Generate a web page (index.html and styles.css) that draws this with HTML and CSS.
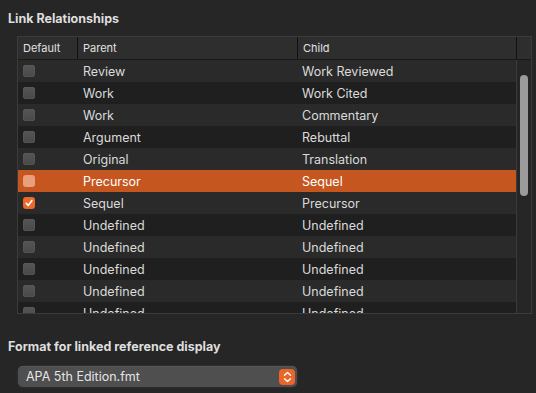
FILE: index.html
```html
<!DOCTYPE html>
<html>
<head>
<title>Link Relationships</title>
<link rel="stylesheet" href="styles.css">
</head>
<body>
<div class="prefs">
<h3 class="sec_title">Link Relationships</h3>
<div class="rel_table">
<div class="rel_head">
<div class="col col_def">Default</div>
<div class="col col_par">Parent</div>
<div class="col col_child">Child</div>
<div class="col col_sb"></div>
</div>
<div class="rel_body">
<div class="rel_rows">
<div class="row"><span class="cell col_def"><i class="chk"></i></span><span class="cell col_par">Review</span><span class="cell col_child">Work Reviewed</span></div>
<div class="row"><span class="cell col_def"><i class="chk"></i></span><span class="cell col_par">Work</span><span class="cell col_child">Work Cited</span></div>
<div class="row"><span class="cell col_def"><i class="chk"></i></span><span class="cell col_par">Work</span><span class="cell col_child">Commentary</span></div>
<div class="row"><span class="cell col_def"><i class="chk"></i></span><span class="cell col_par">Argument</span><span class="cell col_child">Rebuttal</span></div>
<div class="row"><span class="cell col_def"><i class="chk"></i></span><span class="cell col_par">Original</span><span class="cell col_child">Translation</span></div>
<div class="row selected"><span class="cell col_def"><i class="chk"></i></span><span class="cell col_par">Precursor</span><span class="cell col_child">Sequel</span></div>
<div class="row"><span class="cell col_def"><i class="chk on"><svg width="10" height="10" viewBox="0 0 10 10"><path d="M2.2 5.3 L4.2 7.4 L7.9 2.4" fill="none" stroke="#fff" stroke-width="1.6" stroke-linecap="round" stroke-linejoin="round"/></svg></i></span><span class="cell col_par">Sequel</span><span class="cell col_child">Precursor</span></div>
<div class="row"><span class="cell col_def"><i class="chk"></i></span><span class="cell col_par">Undefined</span><span class="cell col_child">Undefined</span></div>
<div class="row"><span class="cell col_def"><i class="chk"></i></span><span class="cell col_par">Undefined</span><span class="cell col_child">Undefined</span></div>
<div class="row"><span class="cell col_def"><i class="chk"></i></span><span class="cell col_par">Undefined</span><span class="cell col_child">Undefined</span></div>
<div class="row"><span class="cell col_def"><i class="chk"></i></span><span class="cell col_par">Undefined</span><span class="cell col_child">Undefined</span></div>
<div class="row"><span class="cell col_def"><i class="chk"></i></span><span class="cell col_par">Undefined</span><span class="cell col_child">Undefined</span></div>
</div>
<div class="scroll_track"><div class="scroll_thumb"></div></div>
</div>
</div>
<h3 class="sec_title fmt_title">Format for linked reference display</h3>
<div class="popup">
<span class="popup_val">APA 5th Edition.fmt</span>
<span class="stepper"><svg width="9" height="12" viewBox="0 0 9 12"><path d="M1.5 4.3 L4.5 1.5 L7.5 4.3 M1.5 7.7 L4.5 10.5 L7.5 7.7" fill="none" stroke="#fff" stroke-width="1.4" stroke-linecap="round" stroke-linejoin="round"/></svg></span>
</div>
</div>
</body>
</html>
```

FILE: styles.css
```css
*{
  box-sizing: border-box;
}
html, body {
  margin: 0;
  height: 100%;
  background-color: #262626;
}
body {
  font-family: "Inter", "Noto Sans", sans-serif;
  color: #dcdcdc;
  overflow: hidden;
}
.prefs {
  padding: 11px 0 0 8px;
}
.sec_title {
  margin: 0;
  font-size: 12.5px;
  line-height: 16px;
  font-weight: 700;
  color: #dedede;
}
.rel_table {
  margin: 9px 0 0 9px;
  width: 515px;
  height: 278px;
  border: 1px solid #3b3b3b;
  background-color: #1f1f1f;
  overflow: hidden;
}
.rel_head {
  display: flex;
  height: 23px;
  background-color: #2e2e2e;
  border-bottom: 1px solid #191919;
  font-size: 11px;
  color: #e2e2e2;
}
.rel_head .col {
  display: flex;
  align-items: center;
  padding-left: 5px;
}
.rel_head .col_par, .rel_head .col_child, .rel_head .col_sb {
  border-left: 1px solid #121212;
}
.col_def { width: 59px; }
.col_par { width: 220px; }
.col_child { width: 219px; }
.col_sb { width: 15px; }
.rel_body {
  display: flex;
  height: 254px;
}
.rel_rows {
  width: 498px;
}
.row {
  display: flex;
  height: 22px;
  align-items: center;
  font-size: 12.5px;
  color: #dadada;
}
.row:nth-child(odd) {
  background-color: #2a2a2a;
}
.row:nth-child(even) {
  background-color: #1f1f1f;
}
.row.selected {
  background-color: #c6561f;
  color: #fff;
}
.cell {
  display: flex;
  align-items: center;
  height: 22px;
  white-space: nowrap;
}
.cell.col_def {
  padding-left: 5px;
}
.cell.col_par {
  padding-left: 6px;
}
.cell.col_child {
  padding-left: 5px;
}
.chk {
  display: flex;
  align-items: center;
  justify-content: center;
  width: 12px;
  height: 12px;
  border-radius: 3px;
  background: linear-gradient(#555, #494949);
  box-shadow: inset 0 0 0 0.5px #5c5c5c;
}
.row.selected .chk {
  background: #e8a07c;
  box-shadow: none;
}
.chk.on {
  background: #ea6a2b;
  box-shadow: none;
}
.scroll_track {
  width: 15px;
  border-left: 1px solid #3a3a3a;
  background-color: #262626;
  padding: 15px 0 0 3px;
}
.scroll_thumb {
  width: 8px;
  height: 121px;
  border-radius: 4px;
  background-color: #9b9b9b;
}
.fmt_title {
  margin-top: 25px;
}
.popup {
  display: flex;
  align-items: center;
  justify-content: space-between;
  margin: 11px 0 0 10px;
  width: 279px;
  height: 21px;
  padding: 0 2px 0 8px;
  border-radius: 5px;
  background-color: #4f4f4f;
  box-shadow: 0 0 0 0.5px #333, inset 0 0.5px 0 #5e5e5e;
  font-size: 12.5px;
  color: #e4e4e4;
}
.stepper {
  display: flex;
  align-items: center;
  justify-content: center;
  width: 16px;
  height: 16px;
  border-radius: 4px;
  background-color: #e9662a;
}
```
